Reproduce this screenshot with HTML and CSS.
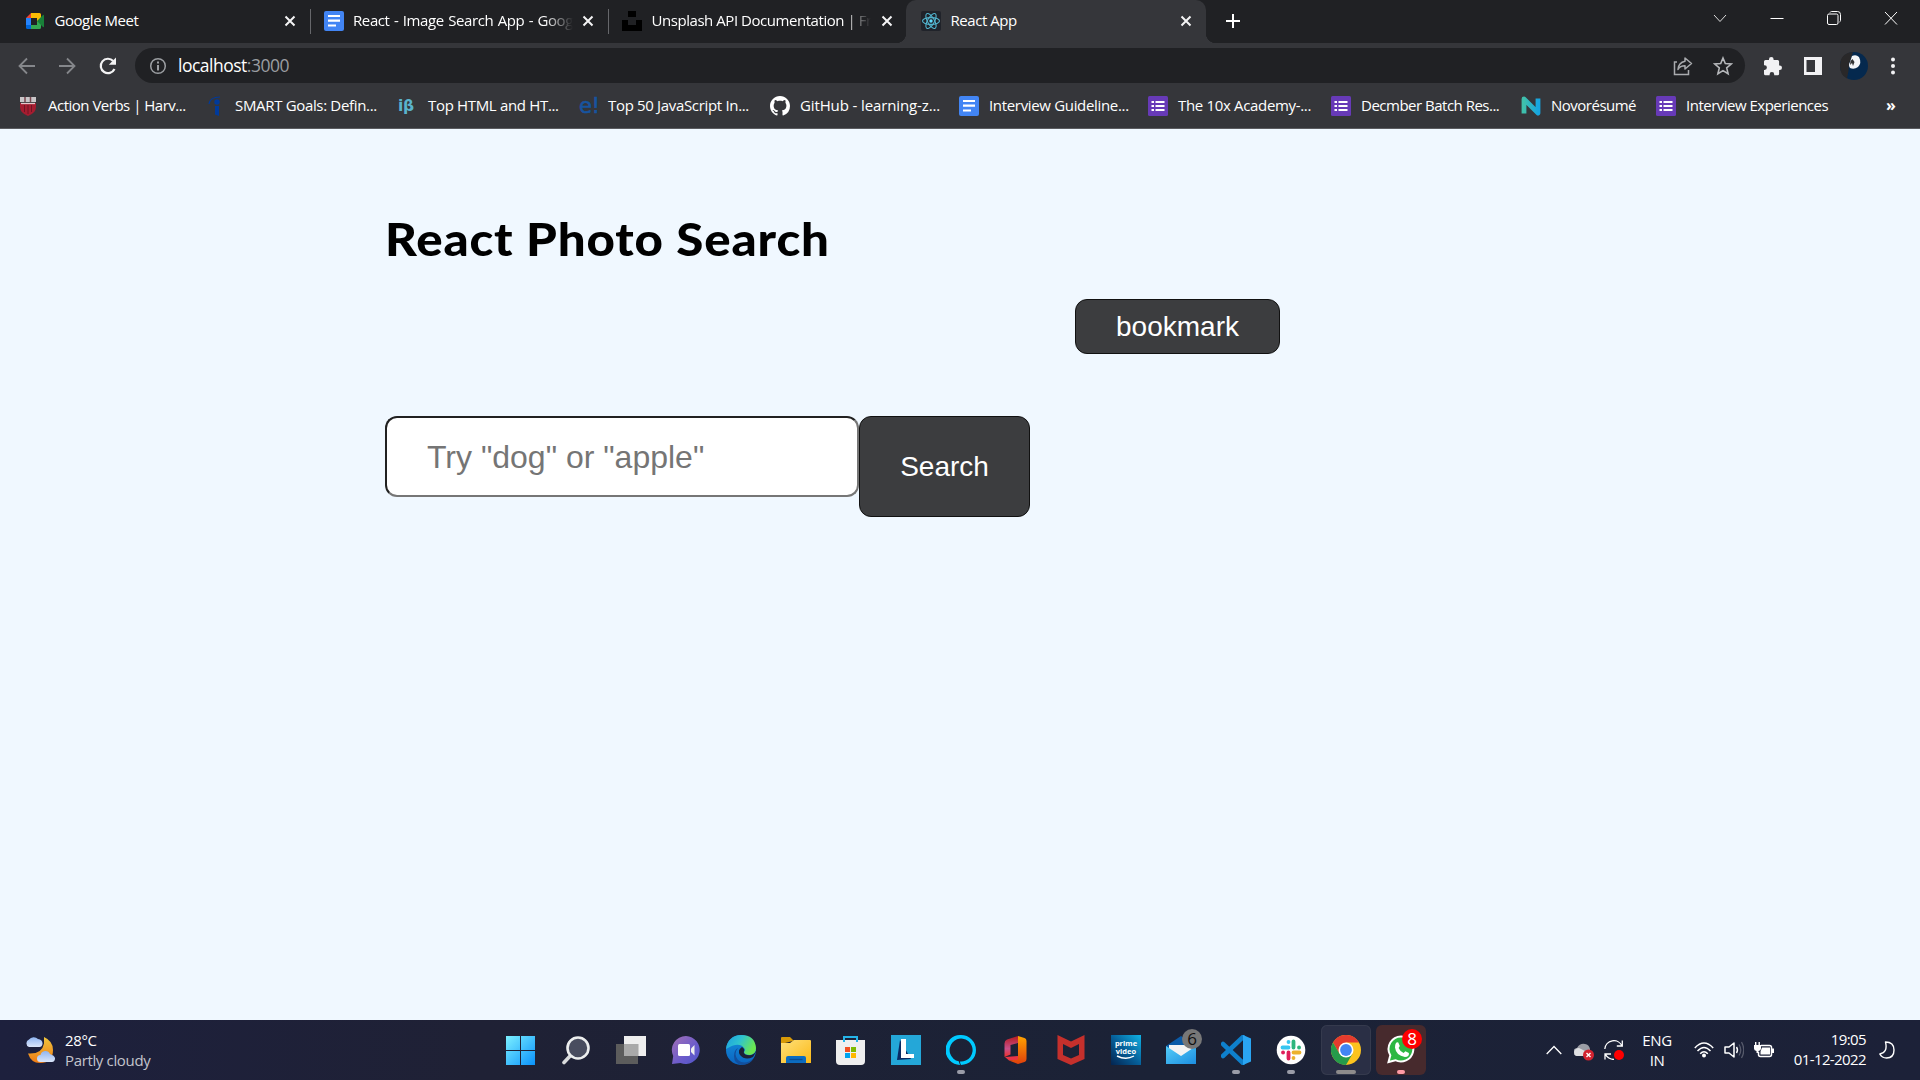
FILE: index.html
```html
<!DOCTYPE html>
<html lang="en">
<head>
<meta charset="utf-8">
<title>React App</title>
<link rel="stylesheet" href="styles.css">
</head>
<body>
<svg class="defs" width="0" height="0">
  <defs>
    <linearGradient id="win" x1="0" y1="0" x2="1" y2="1"><stop offset="0" stop-color="#7cf0ff"/><stop offset="1" stop-color="#0a92fb"/></linearGradient>
    <linearGradient id="teams" x1="0" y1="0" x2="1" y2="1"><stop offset="0" stop-color="#a36fb5"/><stop offset=".6" stop-color="#6a5bcb"/><stop offset="1" stop-color="#4f55c8"/></linearGradient>
    <linearGradient id="edgeA" x1="0" y1="0" x2="1" y2=".4"><stop offset="0" stop-color="#1b9de2"/><stop offset=".5" stop-color="#2fc3cf"/><stop offset="1" stop-color="#6be751"/></linearGradient>
    <linearGradient id="edgeB" x1="0" y1="0" x2="0" y2="1"><stop offset="0" stop-color="#1590dc"/><stop offset="1" stop-color="#0a64c0"/></linearGradient>
    <linearGradient id="fold" x1="0" y1="0" x2="1" y2="1"><stop offset="0" stop-color="#ffe07a"/><stop offset="1" stop-color="#fbb916"/></linearGradient>
    <linearGradient id="office" x1="0" y1="0" x2="0" y2="1"><stop offset="0" stop-color="#ffa400"/><stop offset="1" stop-color="#e0400c"/></linearGradient>
    <linearGradient id="officeL" x1="0" y1="0" x2="0" y2="1"><stop offset="0" stop-color="#b51a1f"/><stop offset=".6" stop-color="#c8508a"/><stop offset="1" stop-color="#f0302c"/></linearGradient>
    <linearGradient id="prime" x1="0" y1="1" x2="1" y2="0"><stop offset="0" stop-color="#04244f"/><stop offset=".5" stop-color="#06609a"/><stop offset="1" stop-color="#10b2e4"/></linearGradient>
    <linearGradient id="mail" x1="0" y1="0" x2="1" y2="1"><stop offset="0" stop-color="#55cdf8"/><stop offset="1" stop-color="#1c8ee0"/></linearGradient>
    <linearGradient id="cloud" x1="0" y1="0" x2="0" y2="1"><stop offset="0" stop-color="#8fb5f2"/><stop offset="1" stop-color="#dbe6fa"/></linearGradient>
    <linearGradient id="moon" x1="0" y1="0" x2="0" y2="1"><stop offset="0" stop-color="#efc53d"/><stop offset="1" stop-color="#f07b14"/></linearGradient>
    <linearGradient id="novo" x1="0" y1="0" x2="1" y2="0"><stop offset="0" stop-color="#3fc0ab"/><stop offset="1" stop-color="#16a5e0"/></linearGradient>
    <symbol id="close" viewBox="0 0 12 12"><path d="M1.500 1.500l9 9M10.500 1.500l-9 9" stroke="#f4f4f5" stroke-width="2"/></symbol>
    <symbol id="doc" viewBox="0 0 20 20"><rect width="20" height="20" rx="2" fill="#4285f4"/><path d="M4 5h12M4 9.700h12M4 14.500h8" stroke="#fff" stroke-width="2.200"/></symbol>
    <symbol id="form" viewBox="0 0 20 20"><rect width="20" height="20" rx="1.500" fill="#673ab7"/><path d="M3.500 6h2.500M7.500 6h9M3.500 10h2.500M7.500 10h9M3.500 14h2.500M7.500 14h9" stroke="#fff" stroke-width="2"/></symbol>
  </defs>
</svg>

<header class="browser">
  <div class="tabstrip">
    <div class="tab">
      <svg class="favicon" viewBox="0 0 20 20"><path d="M6 2v5H1z" fill="#ea4335"/><path d="M6 2h8.500a1.500 1.500 0 0 1 1.500 1.500V8l-4 3V7H6z" fill="#fbbc04"/><path d="M1 7h5v7H1z" fill="#2684fc"/><path d="M1 14h5v4H2.500A1.500 1.500 0 0 1 1 16.500z" fill="#0066da"/><path d="M6 14h6v-4l4 2v4.500a1.500 1.500 0 0 1-1.500 1.500H6z" fill="#34a853"/><path d="M12 10l6-6q1-.6 1 .5v11q0 1-1 .5z" fill="#188038"/></svg>
      <span class="tab-title">Google Meet</span>
      <svg class="close"><use href="#close"/></svg>
    </div>
    <div class="tab divided">
      <svg class="favicon"><use href="#doc"/></svg>
      <span class="tab-title faded wide">React - Image Search App - Goog</span>
      <svg class="close"><use href="#close"/></svg>
    </div>
    <div class="tab divided">
      <svg class="favicon" viewBox="0 0 20 20"><path d="M6 0h8v6H6zM0 9h6v5h8V9h6v11H0z" fill="#000"/></svg>
      <span class="tab-title faded">Unsplash API Documentation | Fr</span>
      <svg class="close"><use href="#close"/></svg>
    </div>
    <div class="tab active">
      <svg class="favicon" viewBox="0 0 20 20"><rect width="20" height="20" rx="2" fill="#20232a"/><g fill="none" stroke="#52b5cf" stroke-width="1.100"><ellipse cx="10" cy="10" rx="8.500" ry="3.400"/><ellipse cx="10" cy="10" rx="8.500" ry="3.400" transform="rotate(60 10 10)"/><ellipse cx="10" cy="10" rx="8.500" ry="3.400" transform="rotate(120 10 10)"/></g><circle cx="10" cy="10" r="1.700" fill="#61dafb"/></svg>
      <span class="tab-title">React App</span>
      <svg class="close"><use href="#close"/></svg>
    </div>
    <svg class="newtab" viewBox="0 0 16 16"><path d="M8 1v14M1 8h14" stroke="#fff" stroke-width="2"/></svg>
    <div class="window-controls">
      <svg viewBox="0 0 16 16"><path d="M2 5l6 6.500L14 5" fill="none" stroke="#ddd"/></svg>
      <svg viewBox="0 0 16 16"><path d="M1.500 8.500h13" stroke="#fff"/></svg>
      <svg viewBox="0 0 16 16"><rect x="1.500" y="4" width="10.500" height="10.500" rx="1.500" fill="none" stroke="#fff"/><path d="M4 2.500q.5-1 1.500-1h6q3 0 3 3v6q0 1-1 1.500" fill="none" stroke="#fff"/></svg>
      <svg viewBox="0 0 16 16"><path d="M2 2l12 12.500M14 2L2 14.500" stroke="#fff"/></svg>
    </div>
  </div>

  <div class="toolbar">
    <div class="nav">
      <svg viewBox="0 0 20 20"><path d="M17 10H2M9 2.500L1.500 10 9 17.500" fill="none" stroke="#85878b" stroke-width="1.800"/></svg>
      <svg viewBox="0 0 20 20"><path d="M1 10h15M9 2.500l7.500 7.500L9 17.500" fill="none" stroke="#85878b" stroke-width="1.800"/></svg>
      <svg viewBox="0 0 20 20"><path d="M16.500 13a7.200 7.200 0 1 1-1.300-8" fill="none" stroke="#f3f3f4" stroke-width="2.200"/><path d="M18 1.500v7.200h-7.200z" fill="#f3f3f4"/></svg>
    </div>
    <div class="omnibox">
      <svg class="info" viewBox="0 0 18 18"><circle cx="9" cy="9" r="7.300" fill="none" stroke="#9b9ea2" stroke-width="1.500"/><path d="M9 4.500v2M9 8v5.500" stroke="#9b9ea2" stroke-width="2"/></svg>
      <span class="url">localhost<span class="port">:3000</span></span>
      <svg class="share" viewBox="0 0 20 20"><path d="M4 6H1.500v12.500h14V14" fill="none" stroke="#a9abae" stroke-width="1.500"/><path d="M12 2l6.500 5.500L12 13V9.800q-5 0-7 3.700.5-7 7-8.200z" fill="none" stroke="#a9abae" stroke-width="1.500" stroke-linejoin="round"/></svg>
      <svg class="star" viewBox="0 0 20 20"><path d="M10 2l2.300 5.500 6 .5-4.600 3.900 1.400 5.800-5.100-3.100-5.100 3.100 1.400-5.800L1.700 8l6-.5z" fill="none" stroke="#b5b7ba" stroke-width="1.600"/></svg>
    </div>
    <div class="actions">
      <svg width="20" height="20" viewBox="0 0 20 20"><path d="M1 5.500a1.500 1.500 0 0 1 1.500-1.500H6v-.8a2.300 2.300 0 0 1 4.600 0V4h4a1.500 1.500 0 0 1 1.500 1.500v4h.6a2.300 2.300 0 0 1 0 4.600h-.6v3.600a1.500 1.500 0 0 1-1.500 1.500h-3.400v-.8a2.300 2.300 0 0 0-4.600 0v.8H2.500A1.500 1.500 0 0 1 1 17.700v-3.800h.6a2.300 2.300 0 0 0 0-4.600H1z" fill="#f2f2f4"/></svg>
      <svg width="18" height="18" viewBox="0 0 18 18"><path fill-rule="evenodd" d="M0 0h18v18H0zM2.500 3v12H11V3z" fill="#f2f2f4"/></svg>
      <svg width="28" height="28" viewBox="0 0 28 28"><circle cx="14" cy="14" r="14" fill="#05294e"/><path d="M13 0Q0 1 0 14q0 9 7 12.500Q9 18 9 12z" fill="#292829"/><path d="M12 4q4-2 7 1 3 6-1 10-4 3-8 1-2-3 0-6z" fill="#f5f6f8"/><path d="M10.500 9l2-2 2 3-1.500 4-1-3-2 2z" fill="#333"/></svg>
      <svg width="6" height="18" viewBox="0 0 6 18"><g fill="#f2f2f4"><circle cx="3" cy="2.500" r="2"/><circle cx="3" cy="9" r="2"/><circle cx="3" cy="15.500" r="2"/></g></svg>
    </div>
  </div>

  <nav class="bookmarks">
    <a><svg viewBox="0 0 20 20"><path d="M2 1h16v5H2z" fill="#c9c6c8"/><path d="M7 1v5M12.500 1v5" stroke="#79464e" stroke-width="1.500"/><path d="M2 7h16v4q0 6-8 9-8-3-8-9z" fill="#a51c30"/><path d="M3 7.500h14" stroke="#e5c7cb" stroke-width="1.300"/><path d="M6.500 9v7M10 9v9M13.500 9v7" stroke="#6e1524" stroke-width="1"/></svg><span>Action Verbs | Harv...</span></a>
    <a><svg viewBox="0 0 20 20"><path d="M4 8Q5 1 15 1" fill="none" stroke="#003a9b" stroke-width="1.200"/><circle cx="12" cy="6" r="2.700" fill="#003a9b"/><path d="M10 10h4v10l-4-1.500z" fill="#003a9b"/></svg><span class="smart">SMART Goals: Defin...</span></a>
    <a><svg viewBox="0 0 20 20"><text x="0" y="15" class="glyph ib">iβ</text></svg><span class="top">Top HTML and HT...</span></a>
    <a><svg viewBox="0 0 20 20"><text x="1" y="17" class="glyph ed">e!</text></svg><span class="top">Top 50 JavaScript In...</span></a>
    <a><svg viewBox="0 0 16 16"><path fill="#fff" d="M8 0C3.580 0 0 3.580 0 8c0 3.540 2.290 6.530 5.470 7.590.4.070.55-.17.55-.38 0-.19-.01-.82-.01-1.490-2.010.37-2.530-.49-2.690-.94-.09-.23-.48-.94-.82-1.130-.28-.15-.68-.52-.01-.53.63-.01 1.080.58 1.230.82.72 1.210 1.870.87 2.330.66.07-.52.28-.87.51-1.070-1.780-.2-3.640-.89-3.640-3.950 0-.87.31-1.590.82-2.150-.08-.2-.36-1.020.08-2.120 0 0 .67-.21 2.200.82.640-.18 1.320-.27 2-.27s1.360.09 2 .27c1.530-1.040 2.200-.82 2.200-.82.44 1.100.16 1.920.08 2.120.51.56.82 1.270.82 2.150 0 3.070-1.870 3.750-3.650 3.950.29.25.54.73.54 1.480 0 1.070-.01 1.930-.01 2.200 0 .21.15.46.55.38A8.010 8.010 0 0 0 16 8c0-4.420-3.580-8-8-8z"/></svg><span class="git">GitHub - learning-z...</span></a>
    <a><svg><use href="#doc"/></svg><span class="top">Interview Guideline...</span></a>
    <a><svg><use href="#form"/></svg><span class="smart">The 10x Academy-...</span></a>
    <a><svg><use href="#form"/></svg><span>Decmber Batch Res...</span></a>
    <a><svg viewBox="0 0 20 20"><path d="M3 17.500V3l14 14V2.500" fill="none" stroke="url(#novo)" stroke-width="4.800" stroke-linejoin="round"/></svg><span>Novorésumé</span></a>
    <a><svg><use href="#form"/></svg><span>Interview Experiences</span></a>
    <b class="more">»</b>
  </nav>
</header>

<main class="page">
  <div class="container">
    <h1>React Photo Search</h1>
    <div class="bookmark-row"><button class="btn">bookmark</button></div>
    <form class="search">
      <input type="text" placeholder='Try "dog" or "apple"'>
      <button type="button" class="btn tall">Search</button>
    </form>
  </div>
</main>

<footer class="taskbar">
  <div class="weather">
    <svg width="30" height="29" viewBox="0 0 30 29"><path d="M19 2q9 4 9 13 0 13-13 13Q6 28 3 18.500q14 1 16-10z" fill="url(#moon)"/><path d="M4 12a4 4 0 0 1 0-7.500A6 6 0 0 1 13 4q5 1 4.500 5-.5 3-3 3z" fill="url(#cloud)"/><path d="M15.500 27a3.500 3.500 0 0 1 0-7A5 5 0 0 1 25 19q5.500 2 5 5-.5 3-3 3z" fill="url(#cloud)"/></svg>
    <div><p>28°C</p><p class="dim">Partly cloudy</p></div>
  </div>

  <div class="apps">
    <span class="app"><svg viewBox="0 0 30 30"><path d="M0 1h14v14H0zM15 1h14v14H15zM0 16h14v14H0zM15 16h14v14H15z" fill="url(#win)"/></svg></span>
    <span class="app"><svg viewBox="0 0 30 30"><path d="M10.500 19.500L3 27.500" stroke="#d9dbdc" stroke-width="3.600" stroke-linecap="round"/><circle cx="17" cy="13" r="10.500" fill="#494d5f" stroke="#eceeee" stroke-width="2.600"/></svg></span>
    <span class="app"><svg viewBox="0 0 30 30"><path d="M8 1h22v20H8z" fill="#eeeeee"/><path d="M0 9h22v20H0z" fill="#5c5c5c"/><path d="M8 9h14.500v12H8z" fill="#a9a9a9"/></svg></span>
    <span class="app"><svg viewBox="0 0 30 30"><path d="M15 1a14 14 0 1 1-5.500 27L1 29l1.200-8A14 14 0 0 1 15 1z" fill="url(#teams)"/><rect x="7" y="9" width="12" height="12" rx="1.500" fill="#fff"/><path d="M20 13.500l3.500-3.500v10.500L20 17z" fill="#eee"/></svg></span>
    <span class="app"><svg viewBox="0 0 30 30"><circle cx="15" cy="15" r="15" fill="url(#edgeB)"/><path d="M0 14C1 5 7 0 15 0q14 0 15 13 0 6-6 7-6 0-6-3 2-2 0-4Q13 6 0 14z" fill="url(#edgeA)"/><path d="M12 13q-5 6 0 12 7 6 16-2-4 7-12 7Q8 29 8 21q0-6 4-8z" fill="#124f9d"/><path d="M16 12q-5 3-2 8 5 6 13 2l3-5v-1q-2 5-9 4-4-1-3-4 1-2-2-4z" fill="#1c2037"/></svg></span>
    <span class="app"><svg viewBox="0 0 30 30"><path d="M0 3q0-1 1-1h8l4 4h-1L0 9z" fill="#d89a08"/><path d="M0 8h9l4-3h16q1 0 1 1v22H0z" fill="url(#fold)"/><path d="M5 28v-5q0-2 2-2h16q2 0 2 2v5z" fill="#0c6cc0"/><path d="M8.500 24.500h13" stroke="#0b4c91" stroke-width="1.300"/></svg></span>
    <span class="app"><svg viewBox="0 0 30 30"><path d="M0 5h29v21q0 4-4 4H4q-4 0-4-4z" fill="#efefef"/><path d="M8 7V2h13v5" fill="none" stroke="#25b4e8" stroke-width="2"/><path d="M9 12h5v5H9z" fill="#f25022"/><path d="M15 12h5v5h-5z" fill="#7fba00"/><path d="M9 18h5v5H9z" fill="#00a4ef"/><path d="M15 18h5v5h-5z" fill="#ffb900"/></svg></span>
    <span class="app"><svg viewBox="0 0 30 30"><path d="M0 0h30v30H0z" fill="#24a7d8"/><path d="M9 5L6 25l14-1z" fill="#0a2a63"/><path d="M10 4h5v15h8v4H10z" fill="#fff"/></svg></span>
    <span class="app run"><svg viewBox="0 0 30 30"><path fill-rule="evenodd" d="M15 0a15 15 0 0 1 0 30q-1-2-1-3.500A11.500 11.500 0 1 0 12.700 26.300L14 30A15 15 0 0 1 15 0z" fill="#00caff"/></svg></span>
    <span class="app"><svg viewBox="0 0 30 30"><path d="M17 1L6 4.500q-2.500 1-2.500 4V22l6-2.500V10l9-2.500z" fill="url(#officeL)"/><path d="M4 22l13-1v4.500H8z" fill="#ea3446"/><path d="M17 1l6.500 2q2 .6 2 3v18q0 2.300-2 3L17 29l-9-3.500 9-1z" fill="url(#office)"/></svg></span>
    <span class="app"><svg viewBox="0 0 30 30"><path d="M1.500 0L15 6.500 28.500 0v24L15 30 1.500 24zM7 9v11l8 3.500 8-3.500V9l-8 4z" fill="#c5302c" fill-rule="evenodd"/></svg></span>
    <span class="app"><svg viewBox="0 0 30 30"><path d="M0 0h30v30H0z" fill="url(#prime)"/><text x="15" y="11" class="pv">prime</text><text x="15" y="19" class="pv">video</text><path d="M6 21q9 4.500 17 0" fill="none" stroke="#fff" stroke-width="1.400"/></svg></span>
    <span class="app"><svg viewBox="0 0 30 30"><path d="M0 11L15 1l15 10v5H0z" fill="#0a5ba8"/><path d="M3 10h24v8L15 23 3 14z" fill="#f3f3f3"/><path d="M0 11l15 10 15-10v18H0z" fill="url(#mail)"/></svg><i class="badge gray">6</i></span>
    <span class="app run"><svg viewBox="0 0 30 30"><path d="M2 21L22 2M2 9l20 19" stroke="#0e80cc" stroke-width="4.500" stroke-linecap="round"/><path d="M22 0l8 3.500v23L22 30z" fill="#2aa5f2"/></svg></span>
    <span class="app run"><svg viewBox="0 0 30 30"><circle cx="15" cy="15" r="14.300" fill="#fff"/><g stroke-width="3.800" stroke-linecap="round"><path d="M12.500 7v.1M6.500 12.500h6" stroke="#36c5f0"/><path d="M17.500 6.500v6M23 12.500h.1" stroke="#2eb67d"/><path d="M17.500 17.500h6M17.500 23v.1" stroke="#ecb22e"/><path d="M12.500 17.500v6M7 17.500h.1" stroke="#e01e5a"/></g></svg></span>
    <span class="app current"><svg viewBox="0 0 30 30"><circle cx="15" cy="15" r="15" fill="#fcc31e"/><path d="M2 7.500A15 15 0 0 1 28 7.500H15L8.500 18.800z" fill="#e53b2e"/><path d="M2 7.500A15 15 0 0 0 15 30l6.500-11.200h-13z" fill="#269b4b"/><circle cx="15" cy="15" r="7.500" fill="#fff"/><circle cx="15" cy="15" r="5.900" fill="#4285f4"/></svg></span>
    <span class="app alert"><svg viewBox="0 0 30 30"><path d="M15.500 1.500a12.500 12.500 0 1 1-6.200 23.700L2.500 27l1.800-6.700A12.500 12.500 0 0 1 15.500 1.500z" fill="#2cb742" stroke="#fff" stroke-width="2"/><path d="M10 8q1-1 2.300-.5l1.500 3.500-1.200 2q1.500 3.500 5 5l1.800-1.800 3.500 1.700q.5 4.100-4 4.100Q10 20.500 9 12.500 9 9 10 8z" fill="#fff"/></svg><i class="badge red">8</i></span>
  </div>

  <div class="tray">
    <svg class="t-chevron" viewBox="0 0 16 10"><path d="M.7 9L8 1.500 15.300 9" fill="none" stroke="#fff" stroke-width="1.300"/></svg>
    <svg class="t-cloud" viewBox="0 0 20 18"><path d="M4 13a4 4 0 0 1-1-8Q6 0 11 1q4 .5 5 5v7z" fill="#9b9da5"/><path d="M2.500 13Q0 12 0 9q1-4 5-4l6 3v5z" fill="#dfe0e3"/><circle cx="14.500" cy="12" r="5.500" fill="#d32330"/><path d="M12.500 10l4 4M16.500 10l-4 4" stroke="#fff" stroke-width="1.400"/></svg>
    <svg class="t-sync" viewBox="0 0 20 20"><path d="M.8 9A9 9 0 0 1 18 6M18.300.500V6h-5.500M1 19.500V14h6M1.500 14.500Q4 19 10 19.500" fill="none" stroke="#fff" stroke-width="1.300"/><circle cx="15" cy="15" r="5" fill="#f00"/></svg>
    <div class="lang"><p>ENG</p><p>IN</p></div>
    <svg class="t-wifi" viewBox="0 0 20 16"><g fill="none" stroke="#fff" stroke-width="1.500"><path d="M.8 6Q10-3.800 19.200 6M3.500 9Q10 1.800 16.500 9M6.200 11.800Q10 7.700 13.800 11.800"/></g><circle cx="10" cy="13.500" r="2" fill="#fff"/></svg>
    <svg class="t-vol" viewBox="0 0 20 18"><path d="M1 6h4l5-4v14l-5-4H1z" fill="none" stroke="#fff" stroke-width="1.500" stroke-linejoin="round"/><path d="M12.500 6q2 3 0 6" fill="none" stroke="#fff" stroke-width="1.400"/><path d="M15 3.500q3.500 5.500 0 11M17.500 1q4.500 8 0 16" fill="none" stroke="#565a6b" stroke-width="1.300"/></svg>
    <svg class="t-bat" viewBox="0 0 20 16"><path d="M7 3.500h8.500q2 0 2 2v7q0 2-2 2h-9q-2 0-2-2V10" fill="none" stroke="#fff" stroke-width="1.500"/><path d="M6.500 9.500L8 5.500h8v7H6.500zM18 6.500h2V11h-2zM0 3h7v3.500q0 2-2.500 2.500v2h-2V9Q0 8.500 0 6.500zM1 0h1.400v3H1zM4.500 0h1.400v3H4.500z" fill="#fff"/></svg>
    <div class="clock"><p>19:05</p><p>01-12-2022</p></div>
    <svg class="t-moon" viewBox="0 0 16 18"><path d="M6.500 1q8.500 0 8.500 8t-7.500 8Q3 17 .8 13 9 11.500 6.500 1z" fill="none" stroke="#fff" stroke-width="1.400" stroke-linejoin="round"/></svg>
  </div>
</footer>
</body>
</html>
```
FILE: styles.css
```css
* { box-sizing: border-box; }
body {
  margin: 0;
  width: 1920px;
  height: 1080px;
  overflow: hidden;
  display: flex;
  flex-direction: column;
  font-family: "Open Sans", "Noto Sans", sans-serif;
  font-size: 15px;
  color: #fff;
}
p { margin: 0; }
.defs { position: absolute; }
svg { flex: none; display: block; }

/* Browser frame */
.browser { height: 129px; background: #35363a; border-bottom: 1px solid #5b5c60; }
.tabstrip { height: 43px; padding-left: 11px; display: flex; background: #202124; }
.tab {
  width: 298.500px;
  padding: 0 14px 2px 14px;
  display: flex;
  align-items: center;
  gap: 9.500px;
  position: relative;
}
.tab.divided::before {
  content: "";
  position: absolute;
  left: 0;
  top: 9px;
  width: 1px;
  height: 25px;
  background: #66676b;
}
.favicon { width: 20px; height: 20px; }
.tab-title {
  flex: 1;
  overflow: hidden;
  padding-bottom: 2px;
  white-space: nowrap;
  letter-spacing: -.45px;
}
.tab-title.wide { letter-spacing: -.4px; word-spacing: .9px; }
.faded { -webkit-mask-image: linear-gradient(90deg, #000 87%, transparent); mask-image: linear-gradient(90deg, #000 87%, transparent); }
.close { width: 12px; height: 12px; }
.active { width: 300px; margin-left: -.5px; padding-left: 15px; background: #35363a; border-radius: 10px 10px 0 0; }
.active::before, .active::after {
  content: "";
  position: absolute;
  bottom: 0;
  width: 10px;
  height: 10px;
}
.active::before { left: -10px; background: radial-gradient(circle at 0 0, transparent 10px, #35363a 10.500px); }
.active::after { right: -10px; background: radial-gradient(circle at 100% 0, transparent 10px, #35363a 10.500px); }
.newtab { width: 16px; height: 16px; margin: 13px 0 0 19px; }
.window-controls { margin: 10px 21px 0 auto; display: flex; gap: 41px; }
.window-controls svg { width: 16px; height: 16px; }

.toolbar { height: 45px; padding: 0 24px 0 18px; display: flex; align-items: center; }
.nav { display: flex; gap: 20px; }
.nav svg { width: 20px; height: 20px; }
.omnibox {
  width: 1610px;
  height: 35px;
  margin-left: 17px;
  padding: 0 12px 0 14px;
  border-radius: 18px;
  background: #202124;
  display: flex;
  align-items: center;
}
.info { width: 18px; height: 18px; margin-right: 11px; }
.url { flex: 1; padding-bottom: 2px; font-size: 17.500px; letter-spacing: -.5px; }
.port { color: #9a9da1; }
.share { width: 20px; height: 20px; margin-right: 20px; }
.star { width: 20px; height: 20px; }
.actions { margin-left: auto; display: flex; align-items: center; }
.actions svg:nth-child(2) { margin-left: 21px; }
.actions svg:nth-child(3) { margin-left: 18px; }
.actions svg:nth-child(4) { margin-left: 22px; }

.bookmarks {
  height: 36px;
  padding: 0 0 1px 18px;
  display: grid;
  grid-template-columns: 187px 193px 180px 192px 189px 189px 183px 190px 135px 230px auto;
  align-items: center;
}
.bookmarks a { display: flex; align-items: center; gap: 10px; white-space: nowrap; letter-spacing: -.5px; }
.bookmarks svg { width: 20px; height: 20px; overflow: visible; }
.bookmarks span { padding-bottom: 2px; }
.bookmarks .smart { letter-spacing: -.33px; }
.bookmarks .top { letter-spacing: -.33px; }
.bookmarks .git { letter-spacing: -.12px; }
.more { font-size: 16px; line-height: 20px; padding-bottom: 2px; }
.glyph { font-family: "DejaVu Sans", sans-serif; letter-spacing: -.5px; }
.ib { font-size: 15.500px; font-weight: 700; letter-spacing: -.2px; fill: #5ab3cc; }
.ed { font-size: 21px; fill: #17549f; stroke: #17549f; stroke-width: .6px; }

/* Photo search page */
.page { height: 891px; background: #f0f8ff; color: #000; }
.container { width: 1150px; padding: 79px 0 0; margin-left: 385px; }
h1 {
  margin: 0;
  height: 91px;
  font: 900 46px/62px Lato, sans-serif;
  letter-spacing: .8px;
  white-space: nowrap;
  transform: scaleX(1.070);
  transform-origin: 0 0;
}
.bookmark-row { height: 117px; padding-left: 690px; }
.btn {
  width: 205px;
  height: 55px;
  padding: 0;
  border: 1px solid #111;
  border-radius: 12px;
  background: #3c3d3f;
  color: #fff;
  font: 28px "Liberation Sans", Arial, sans-serif;
}
.search { display: flex; align-items: flex-start; }
.search input {
  width: 474px;
  height: 81px;
  padding: 1px 40px 0 40px;
  border: 2px inset #767676;
  border-radius: 12px;
  background: #fff;
  font: 32px "Liberation Sans", Arial, sans-serif;
}
.search input::placeholder { color: #757575; }
.btn.tall { width: 171px; height: 101px; }

/* Windows taskbar */
.taskbar {
  height: 60px;
  display: flex;
  align-items: center;
  background: linear-gradient(90deg, #1d203d, #1f2135 25%, #1b2236 60%, #1c2138);
  line-height: 20px;
}
.weather { width: 496px; padding-left: 25px; display: flex; gap: 10px; align-items: center; letter-spacing: -.35px; }
.weather svg { margin-top: -2px; }
.dim { color: #c3c4cc; }
.apps { display: flex; gap: 5px; }
.app {
  width: 50px;
  height: 50px;
  border-radius: 6px;
  display: flex;
  justify-content: center;
  align-items: center;
  position: relative;
}
.app svg { width: 30px; height: 30px; }
.run::after, .current::after, .alert::after {
  content: "";
  position: absolute;
  left: 21px;
  bottom: 1px;
  width: 8px;
  height: 4px;
  border-radius: 2px;
  background: #9a9ca8;
}
.current { background: #2a2f45; box-shadow: inset 0 0 0 1px #353a4d; }
.current::after { left: 15px; width: 20px; background: #8d8b8b; }
.alert { background: #472a2d; }
.alert::after { background: #ff9ba5; }
.badge {
  position: absolute;
  left: 26px;
  top: 4px;
  width: 20px;
  height: 20px;
  border-radius: 50%;
  text-align: center;
  font-style: normal;
  font-size: 17px;
}
.gray { background: #777; color: #111; }
.red { background: #f00; }
.pv { fill: #fff; font: 700 7.500px "Open Sans", sans-serif; text-anchor: middle; }

.tray { flex: 1; padding-left: 200px; margin-left: -80px; display: flex; align-items: center; }
.t-chevron { width: 16px; height: 10px; }
.t-cloud { width: 20px; height: 18px; margin-left: 12px; margin-top: 3px; }
.t-sync { width: 20px; height: 20px; margin-left: 10px; }
.lang { width: 44px; margin-left: 11px; text-align: center; letter-spacing: -.4px; }
.t-wifi { width: 20px; height: 16px; margin-left: 15px; }
.t-vol { width: 20px; height: 18px; margin-left: 10px; }
.t-bat { width: 20px; height: 16px; margin-left: 10px; }
.clock { width: 92px; padding-bottom: 2px; text-align: right; letter-spacing: -.6px; white-space: nowrap; }
.t-moon { width: 16px; height: 18px; margin-left: 13px; }
```
